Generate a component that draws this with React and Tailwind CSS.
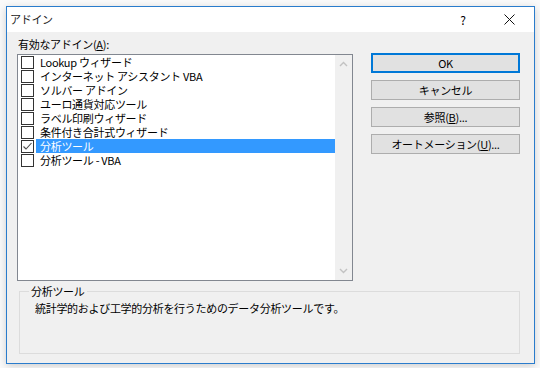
import React from "react";

const items = [
  { label: "Lookup ウィザード", checked: false },
  { label: "インターネット アシスタント VBA", checked: false },
  { label: "ソルバー アドイン", checked: false },
  { label: "ユーロ通貨対応ツール", checked: false },
  { label: "ラベル印刷ウィザード", checked: false },
  { label: "条件付き合計式ウィザード", checked: false },
  { label: "分析ツール", checked: true, selected: true },
  { label: "分析ツール - VBA", checked: false },
];

const CheckBox = ({ checked }) => (
  <div className="w-[13px] h-[13px] border border-[#333333] bg-white flex items-center justify-center shrink-0">
    {checked && (
      <svg width="11" height="11" viewBox="0 0 11 11">
        <path d="M1.5 5.5 L4 8 L9.5 2" fill="none" stroke="#4a4a4a" strokeWidth="1.1" />
      </svg>
    )}
  </div>
);

const Button = ({ children, primary }) => (
  <div
    className={`h-[20px] w-[149px] flex items-center justify-center text-[11px] tracking-[-0.3px] text-black bg-[#e1e1e1] ${
      primary ? "border-2 border-[#0078d7]" : "border border-[#adadad]"
    }`}
  >
    {children}
  </div>
);

const App = () => {
  return (
    <div
      className="w-[540px] h-[368px] bg-[#fafafa] pt-[6px] pl-[6px]"
      style={{ fontFamily: '"Noto Sans CJK JP", "Noto Sans", sans-serif' }}
    >
      <div className="w-[529px] h-[358px] border border-[#2a7ccc] flex flex-col shadow-[0_2px_8px_rgba(0,0,0,0.18)]">
        {/* title bar */}
        <div className="h-[25px] bg-white flex items-center shrink-0">
          <span className="pl-[3px] text-[11px] tracking-[-0.3px] text-[#222222]">アドイン</span>
          <span className="ml-auto w-[46px] text-center text-[12px] text-black">?</span>
          <span className="w-[46px] flex justify-center mr-[2px]">
            <svg width="11" height="11" viewBox="0 0 11 11">
              <path d="M0.5 0.5 L10.5 10.5 M10.5 0.5 L0.5 10.5" stroke="#111111" strokeWidth="1" />
            </svg>
          </span>
        </div>

        {/* body */}
        <div className="flex-1 bg-[#f0f0f0] pl-[10px] pt-[4px]">
          <div className="flex">
            <div className="w-[336px]">
              <div className="h-[18px] pl-[1px] text-[11px] tracking-[-0.3px] leading-[16px] text-black">
                有効なアドイン(<span className="underline">A</span>):
              </div>
              <div className="h-[227px] border border-[#828790] bg-white flex">
                <div className="flex-1">
                  {items.map((it) => (
                    <div key={it.label} className="h-[14px] flex items-center">
                      <div className="ml-[3px] mr-[2px]">
                        <CheckBox checked={it.checked} />
                      </div>
                      <div
                        className={`h-[14px] flex items-center pl-[4px] pr-[2px] text-[11px] tracking-[-0.3px] leading-[13px] whitespace-nowrap ${
                          it.selected ? "flex-1 bg-[#3399ff] text-white" : "text-black"
                        }`}
                      >
                        {it.label}
                      </div>
                    </div>
                  ))}
                </div>
                <div className="w-[17px] bg-[#f0f0f0] flex flex-col items-center justify-between py-[6px]">
                  <svg width="9" height="6" viewBox="0 0 9 6">
                    <path d="M1 5 L4.5 1.5 L8 5" fill="none" stroke="#c2c2c2" strokeWidth="1.4" />
                  </svg>
                  <svg width="9" height="6" viewBox="0 0 9 6">
                    <path d="M1 1 L4.5 4.5 L8 1" fill="none" stroke="#c2c2c2" strokeWidth="1.4" />
                  </svg>
                </div>
              </div>
            </div>

            <div className="ml-[18px] mt-[17px] flex flex-col gap-[7px]">
              <Button primary>OK</Button>
              <Button>キャンセル</Button>
              <Button>
                参照(<span className="underline">B</span>)...
              </Button>
              <Button>
                オートメーション(<span className="underline">U</span>)...
              </Button>
            </div>
          </div>

          <fieldset className="ml-[2px] mt-[3px] w-[501px] h-[70px] border border-[#dcdcdc] px-0">
            <legend className="ml-[9px] px-[2px] text-[11px] tracking-[-0.3px] leading-[14px] text-black">分析ツール</legend>
            <div className="pl-[15px] pt-[2px] text-[11px] tracking-[-0.3px] leading-[16px] text-black">
              統計学的および工学的分析を行うためのデータ分析ツールです。
            </div>
          </fieldset>
        </div>
      </div>
    </div>
  );
};

export default App;
